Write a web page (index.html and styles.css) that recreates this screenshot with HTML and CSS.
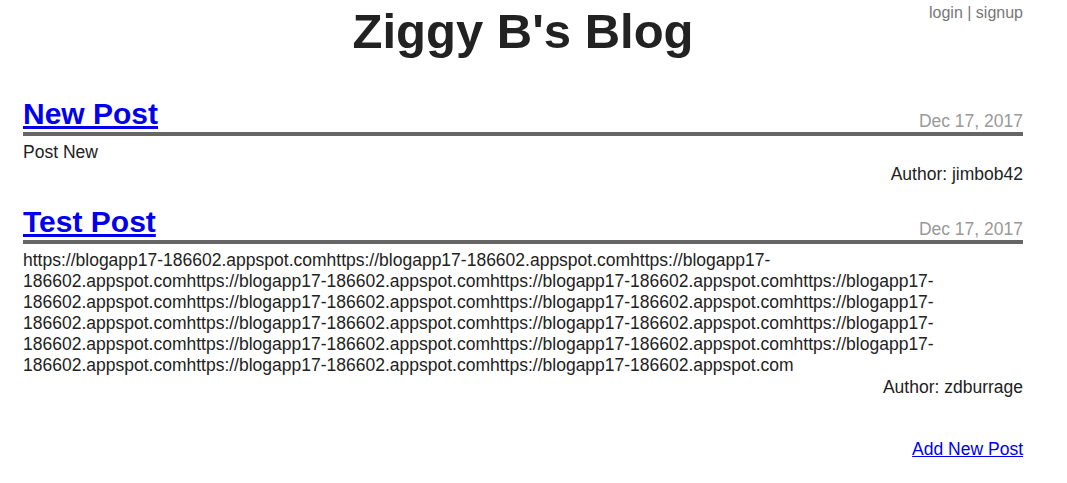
FILE: index.html
```html
<!DOCTYPE html>
<html lang="en">
<head>
<meta charset="utf-8">
<title>Ziggy B's Blog</title>
<link rel="stylesheet" href="styles.css">
</head>
<body>
<div class="page">
  <header class="top">
    <div class="spacer"></div>
    <h1 class="site-title">Ziggy B's Blog</h1>
    <nav class="auth"><a href="#">login</a> | <a href="#">signup</a></nav>
  </header>

  <article class="post">
    <div class="post-head">
      <h2 class="post-title"><a href="#">New Post</a></h2>
      <span class="post-date">Dec 17, 2017</span>
    </div>
    <p class="post-body">Post New</p>
    <p class="post-author">Author: jimbob42</p>
  </article>

  <article class="post">
    <div class="post-head">
      <h2 class="post-title"><a href="#">Test Post</a></h2>
      <span class="post-date">Dec 17, 2017</span>
    </div>
    <p class="post-body">https://blogapp17-186602.appspot.comhttps://blogapp17-186602.appspot.comhttps://blogapp17-186602.appspot.comhttps://blogapp17-186602.appspot.comhttps://blogapp17-186602.appspot.comhttps://blogapp17-186602.appspot.comhttps://blogapp17-186602.appspot.comhttps://blogapp17-186602.appspot.comhttps://blogapp17-186602.appspot.comhttps://blogapp17-186602.appspot.comhttps://blogapp17-186602.appspot.comhttps://blogapp17-186602.appspot.comhttps://blogapp17-186602.appspot.comhttps://blogapp17-186602.appspot.comhttps://blogapp17-186602.appspot.comhttps://blogapp17-186602.appspot.comhttps://blogapp17-186602.appspot.com</p>
    <p class="post-author">Author: zdburrage</p>
  </article>

  <div class="actions">
    <a href="#" class="add-link">Add New Post</a>
  </div>
</div>
</body>
</html>
```

FILE: styles.css
```css
html, body {
  margin: 0;
  padding: 0;
  background: #ffffff;
}

body {
  font-family: "Liberation Sans", Arial, Helvetica, sans-serif;
  color: #222222;
  font-size: 17.5px;
  line-height: 21px;
}

.page {
  width: 1000px;
  margin-left: 23px;
}

.top {
  display: grid;
  grid-template-columns: 1fr auto 1fr;
  align-items: start;
}

.site-title {
  margin: 3px 0 0 0;
  font-size: 49px;
  line-height: 56px;
  font-weight: bold;
  color: #222222;
  text-align: center;
}

.auth {
  justify-self: end;
  font-size: 16px;
  line-height: 18px;
  margin-top: 4px;
  color: #777777;
}

.auth a {
  color: #777777;
  text-decoration: none;
}

.post {
  margin-top: 37px;
}

.post + .post {
  margin-top: 19px;
}

.post-head {
  display: flex;
  justify-content: space-between;
  align-items: flex-end;
  border-bottom: 4px solid #666666;
}

.post-title {
  margin: 0;
  font-size: 30px;
  line-height: 36px;
  font-weight: bold;
}

.post-title a {
  color: #0000ee;
  text-decoration: underline;
}

.post-date {
  color: #999999;
  line-height: 21px;
}

.post-body {
  margin: 6px 0 0 0;
  word-wrap: break-word;
  width: 920px;
}

.post-author {
  margin: 1px 0 0 0;
  text-align: right;
}

.actions {
  margin-top: 41px;
  text-align: right;
}

.add-link {
  color: #0000ee;
  text-decoration: underline;
}
```
